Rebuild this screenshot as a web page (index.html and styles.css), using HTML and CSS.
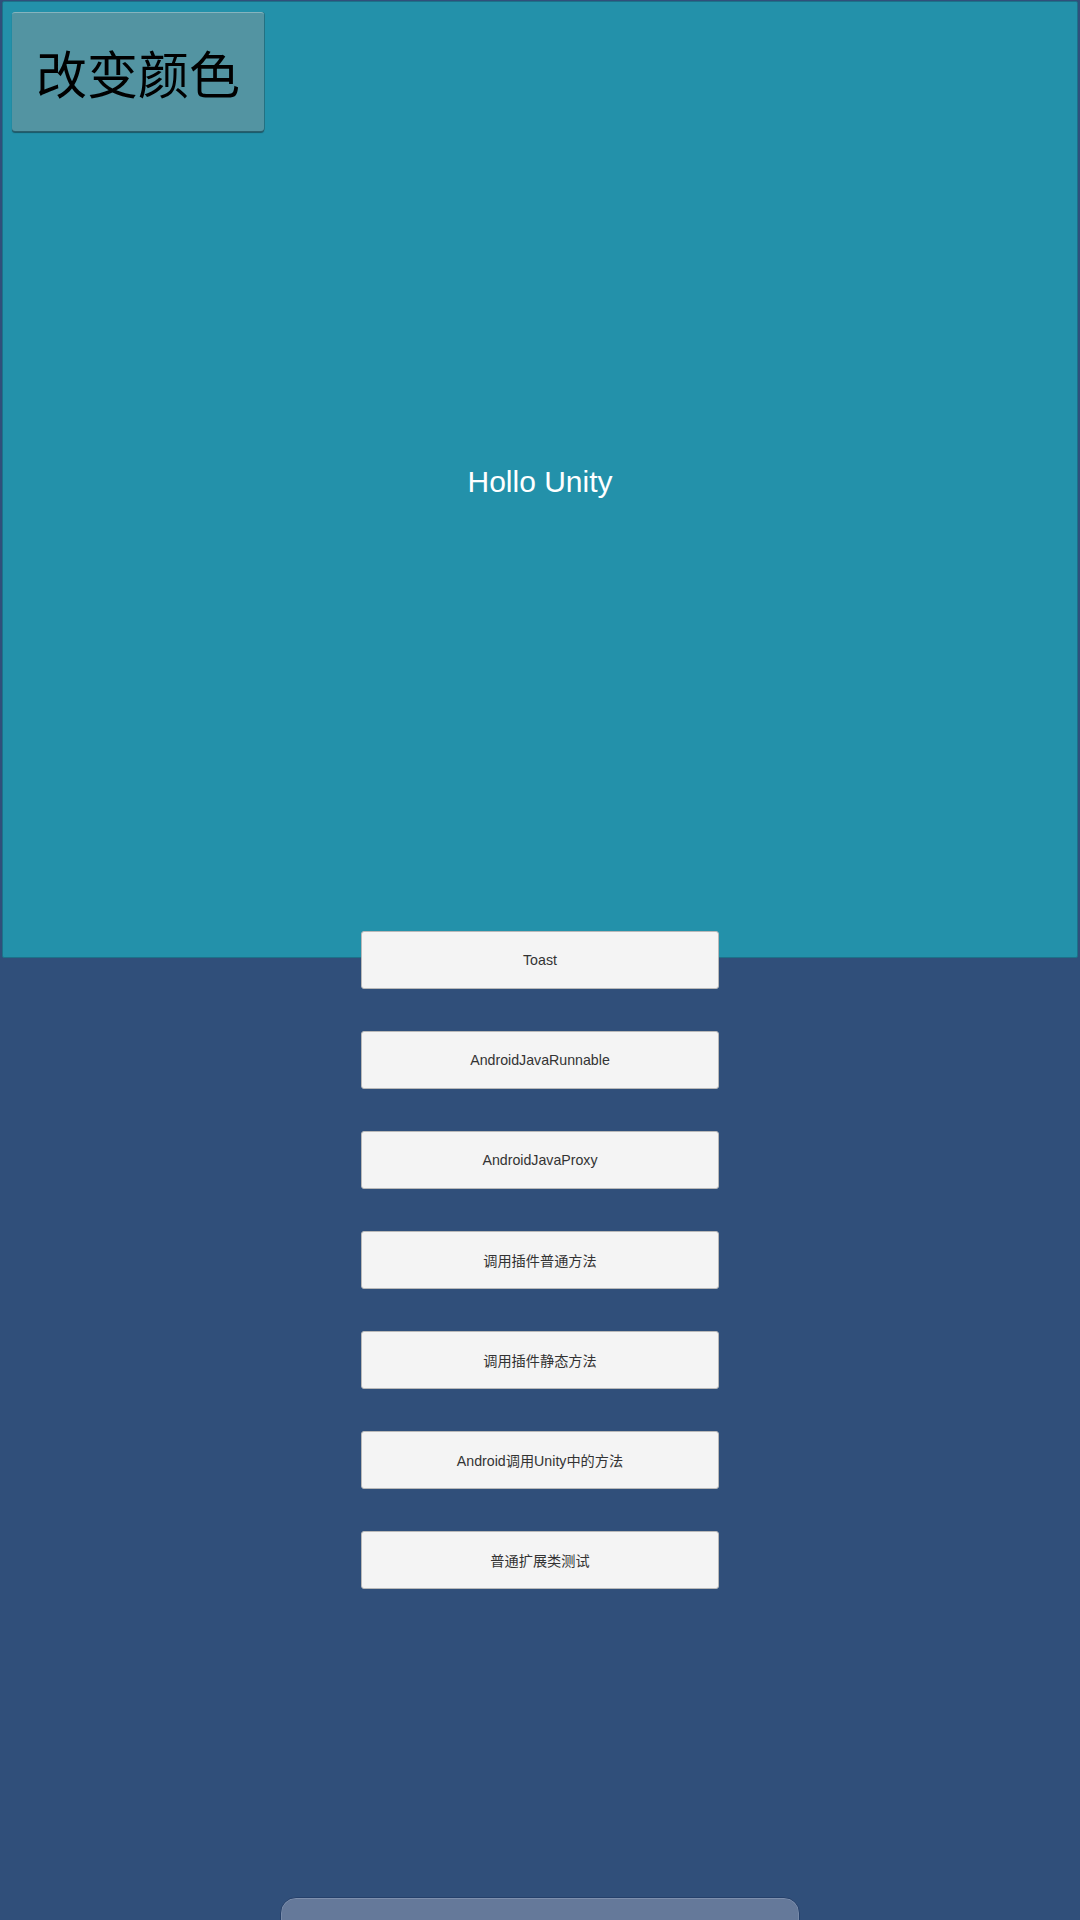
FILE: index.html
```html
<!DOCTYPE html>
<html lang="zh">
<head>
<meta charset="utf-8">
<title>Hollo Unity</title>
<link rel="stylesheet" href="styles.css">
</head>
<body>
<div class="screen">
  <section class="panel">
    <button class="color-btn">改变颜色</button>
    <div class="hello">Hollo Unity</div>
  </section>
  <div class="actions">
    <button class="action">Toast</button>
    <button class="action">AndroidJavaRunnable</button>
    <button class="action">AndroidJavaProxy</button>
    <button class="action">调用插件普通方法</button>
    <button class="action">调用插件静态方法</button>
    <button class="action">Android调用Unity中的方法</button>
    <button class="action">普通扩展类测试</button>
  </div>
  <div class="dock"></div>
</div>
</body>
</html>
```

FILE: styles.css
```css
* { box-sizing: border-box; }
html, body {
  margin: 0;
  padding: 0;
}
body {
  width: 1080px;
  height: 1920px;
  overflow: hidden;
  background: #304f7a;
  font-family: "Liberation Sans", "Noto Sans CJK SC", sans-serif;
}
.screen {
  width: 1080px;
  height: 1920px;
  display: flex;
  flex-direction: column;
  align-items: center;
  overflow: hidden;
}
.panel {
  width: 1076px;
  height: 957px;
  margin-top: 1px;
  background: #2391aa;
  border: 1px solid #1d7189;
  border-radius: 2px;
  display: grid;
  grid-template: 1fr / 1fr;
  flex-shrink: 0;
}
.color-btn {
  grid-area: 1 / 1;
  align-self: start;
  justify-self: start;
  margin: 10px 0 0 9px;
  width: 252px;
  height: 119px;
  background: #5394a2;
  border: none;
  border-top: 1px solid #86b4be;
  border-radius: 3px;
  box-shadow: 0 1px 0 #2b5f6c, 0 2px 1px rgba(20, 50, 60, 0.6), 1px 0 0 rgba(40, 90, 100, 0.5);
  font-family: "Noto Sans CJK SC", sans-serif;
  font-size: 51px;
  color: #000;
  padding: 0;
  line-height: 1;
}
.hello {
  grid-area: 1 / 1;
  align-self: center;
  justify-self: center;
  margin-top: 4px;
  color: #ffffff;
  font-size: 30px;
  line-height: 1;
}
.actions {
  margin-top: -27px;
  display: flex;
  flex-direction: column;
  gap: 42px;
  flex-shrink: 0;
}
.action {
  width: 358px;
  height: 58px;
  background: #f4f4f4;
  border: 1px solid #b8b8b8;
  border-radius: 3px;
  font-family: "Liberation Sans", "Noto Sans CJK SC", sans-serif;
  font-size: 14.2px;
  color: #333333;
  padding: 0;
}
.dock {
  margin-top: 308px;
  width: 520px;
  height: 80px;
  flex-shrink: 0;
  background: #65799a;
  border: 1px solid #25406a;
  border-radius: 16px;
  box-shadow: inset 0 1px 0 #7d8fad, inset 1px 0 0 #7689a8, inset -1px 0 0 #7689a8;
}
```
